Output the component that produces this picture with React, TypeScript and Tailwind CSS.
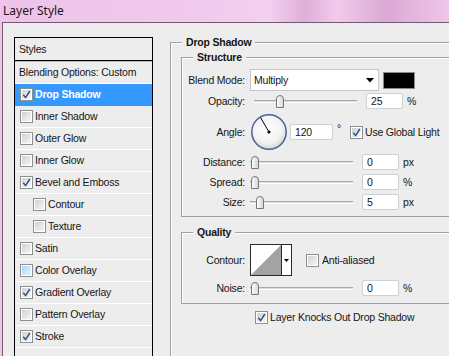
import clsx from "clsx";

const ui = "font-['Liberation_Sans',Arial,sans-serif] text-[10.5px] leading-[13px] tracking-[-0.2px] text-[#151515]";

const styleRows = [
  { label: "Drop Shadow", checked: true, selected: true },
  { label: "Inner Shadow" },
  { label: "Outer Glow" },
  { label: "Inner Glow" },
  { label: "Bevel and Emboss", checked: true },
  { label: "Contour", indent: true },
  { label: "Texture", indent: true },
  { label: "Satin" },
  { label: "Color Overlay", hover: true },
  { label: "Gradient Overlay", checked: true },
  { label: "Pattern Overlay" },
  { label: "Stroke", checked: true },
];

function Check({ checked, hover }: { checked?: boolean; hover?: boolean }) {
  return (
    <span className="flex h-[13px] w-[13px] shrink-0 border border-[#8e8f8f] bg-white p-px">
      <span
        className={clsx(
          "flex h-full w-full items-center justify-center",
          hover ? "bg-gradient-to-br from-[#a9d6f3] to-[#e6f4fd]" : "bg-gradient-to-br from-[#cfd1d4] to-[#f7f7f7]"
        )}
      >
        {checked && (
          <svg width="9" height="9" viewBox="0 0 9 9">
            <path d="M1.3 4.8 L3.6 7.6 L7.8 1" fill="none" stroke="#2b4c8c" strokeWidth="1.4" />
          </svg>
        )}
      </span>
    </span>
  );
}

function Slider({ thumb, className }: { thumb: string; className?: string }) {
  return (
    <div className={clsx("relative h-[13px] w-[103px] shrink-0", className)}>
      <div className="absolute left-0 right-0 top-[5px] h-[3px] border-t border-b border-t-[#a9a9a9] border-b-white bg-[#dcdcdc]" />
      <svg className={clsx("absolute top-0", thumb)} width="8" height="13" viewBox="0 0 8 13">
        <defs>
          <linearGradient id="th" x1="0" x2="1" y1="0" y2="0">
            <stop offset="0" stopColor="#ffffff" />
            <stop offset="1" stopColor="#d4d4d4" />
          </linearGradient>
        </defs>
        <path d="M0.5 12.5 V4 Q0.5 0.5 4 0.5 Q7.5 0.5 7.5 4 V12.5 Z" fill="url(#th)" stroke="#777" />
      </svg>
    </div>
  );
}

function NumBox({ value, className }: { value: string; className?: string }) {
  return (
    <div
      className={clsx(
        "flex h-[16px] shrink-0 items-center rounded-[2px] border border-[#cdd0d4] bg-white pl-[4px]",
        className ?? "w-[37px]"
      )}
    >
      {value}
    </div>
  );
}

function Label({ children }: { children: string }) {
  return <span className="w-[64px] shrink-0 pr-px text-right">{children}</span>;
}

function Group({ title, children, className }: { title: string; children: React.ReactNode; className?: string }) {
  return (
    <div className={clsx("flex flex-col border border-[#a0a0a0] shadow-[inset_1px_1px_0_#fff]", className)}>
      <span className="-mt-[7px] ml-[11px] self-start bg-[#ededed] px-[4px] font-bold">{title}</span>
      {children}
    </div>
  );
}

export default function App() {
  return (
    <div className="h-[356px] w-[449px] overflow-hidden bg-[linear-gradient(90deg,#eec4ea_0%,#f0c9ec_40%,#f3cff0_60%,#dfafd9_68%,#f1caec_75%,#dba9d4_86%,#efc5ea_100%)]">
      <div className="flex h-[22px] items-center pl-[3px] font-['Noto_Sans','Open_Sans',sans-serif] text-[12px] text-[#1c1420]">
        Layer Style
      </div>

      <div className={clsx("ml-[2px] flex h-[334px] border-l border-t border-[#6f5b6c] bg-[#ededed]", ui)}>
        <div className="ml-[11px] mt-[14px] flex h-[340px] w-[139px] shrink-0 flex-col border border-black">
          <div className="flex h-[23px] items-center border-b border-black pl-[4px]">Styles</div>
          <div className="h-px bg-[#b4b4b4]" />
          <div className="flex h-[22px] items-center border-b border-white pl-[4px]">Blending Options: Custom</div>
          {styleRows.map((r) => (
            <div
              key={r.label}
              className={clsx(
                "flex h-[22px] items-center gap-[2px] border-b",
                r.indent ? "pl-[18px]" : "pl-[5px]",
                r.selected ? "border-[#3399ff] bg-[#3399ff] font-bold text-white" : "border-white"
              )}
            >
              <Check checked={r.checked} hover={r.hover} />
              <span>{r.label}</span>
            </div>
          ))}
          <div className="h-[22px]" />
        </div>

        <Group title="Drop Shadow" className="ml-[17px] mt-[19px] h-[340px] w-[300px] shrink-0 border-r-0 border-b-0">
          <Group title="Structure" className="ml-[10px] mt-[8px] w-[290px] border-r-0 pb-[6px]">
            <div className="mt-[5px] flex items-center gap-[4px]">
              <Label>Blend Mode:</Label>
              <div className="flex h-[22px] w-[129px] items-center justify-between border border-[#c3c6ca] bg-white pl-[3px] pr-[4px]">
                <span>Multiply</span>
                <svg width="8" height="5" viewBox="0 0 8 5">
                  <path d="M0 0 H8 L4 4.5 Z" fill="#000" />
                </svg>
              </div>
              <div className="h-[17px] w-[32px] border border-[#8a8a8a] bg-black" />
            </div>

            <div className="mt-[2px] flex items-center gap-[4px]">
              <Label>Opacity:</Label>
              <Slider thumb="left-[22px]" className="ml-[4px] w-[99px]" />
              <NumBox value="25" className="ml-[5px] w-[37px]" />
              <span>%</span>
            </div>

            <div className="mt-[4px] flex items-center gap-[4px]">
              <Label>Angle:</Label>
              <svg width="38" height="38" viewBox="0 0 38 38">
                <defs>
                  <radialGradient id="dial" cx="0.45" cy="0.4" r="0.6">
                    <stop offset="0" stopColor="#ffffff" />
                    <stop offset="0.7" stopColor="#f2f2f2" />
                    <stop offset="1" stopColor="#d6d6d6" />
                  </radialGradient>
                </defs>
                <circle cx="19" cy="19" r="17.2" fill="url(#dial)" stroke="#4d6295" strokeWidth="1.5" />
                <line x1="19" y1="19" x2="10.5" y2="4.5" stroke="#000" strokeWidth="1" />
                <circle cx="19" cy="19" r="1.6" fill="#000" />
              </svg>
              <NumBox value="120" className="-ml-[2px] w-[43px]" />
              <span className="-mt-[8px]">°</span>
              <span className="ml-[5px] flex items-center gap-[2px]">
                <Check checked />
                <span>Use Global Light</span>
              </span>
            </div>

            {[
              { l: "Distance:", v: "0", u: "px", t: "left-[1px]" },
              { l: "Spread:", v: "0", u: "%", t: "left-[1px]" },
              { l: "Size:", v: "5", u: "px", t: "left-[6px]" },
            ].map((row, i) => (
              <div key={row.l} className={clsx("flex items-center gap-[4px]", i === 0 ? "mt-[3px]" : "mt-[4px]")}>
                <Label>{row.l}</Label>
                <Slider thumb={row.t} />
                <NumBox value={row.v} className="ml-[5px] w-[37px]" />
                <span>{row.u}</span>
              </div>
            ))}
          </Group>

          <Group title="Quality" className="ml-[10px] mt-[15px] w-[290px] border-r-0 pb-[7px]">
            <div className="mt-[5px] flex items-center gap-[4px]">
              <Label>Contour:</Label>
              <div className="flex h-[32px] w-[42px] border border-[#2a2a2a] bg-white">
                <svg width="30" height="30" viewBox="0 0 30 30" className="shrink-0">
                  <path d="M0 30 L30 0 V30 Z" fill="#a3a3a3" />
                </svg>
                <div className="flex flex-1 items-center justify-center border-l border-[#2a2a2a]">
                  <svg width="5" height="3" viewBox="0 0 5 3">
                    <path d="M0 0 H5 L2.5 3 Z" fill="#000" />
                  </svg>
                </div>
              </div>
              <span className="ml-[10px] flex items-center gap-[3px]">
                <Check />
                <span>Anti-aliased</span>
              </span>
            </div>
            <div className="mt-[4px] flex items-center gap-[4px]">
              <Label>Noise:</Label>
              <Slider thumb="left-[1px]" />
              <NumBox value="0" className="ml-[5px] w-[37px]" />
              <span>%</span>
            </div>
          </Group>

          <div className="mt-[7px] flex items-center gap-[2px] pl-[84px]">
            <Check checked />
            <span>Layer Knocks Out Drop Shadow</span>
          </div>
        </Group>
      </div>
    </div>
  );
}
